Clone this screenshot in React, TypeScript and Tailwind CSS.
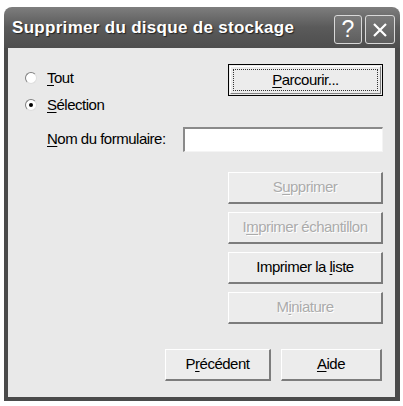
import type { ReactNode } from 'react'

const font = { fontFamily: '"Liberation Sans", Arial, sans-serif' }

const Mn = ({ children }: { children: ReactNode }) => <span className="underline underline-offset-2">{children}</span>

type BtnProps = { children: ReactNode; width: string; disabled?: boolean; focused?: boolean }

const Btn = ({ children, width, disabled, focused }: BtnProps) => {
  const base = `${width} h-[32px] flex items-center justify-center bg-[#ececec] text-[15px] tracking-[-0.5px]`
  const text = disabled ? 'text-[#ababab] [text-shadow:1px_1px_0_#ffffff]' : 'text-black'
  if (focused) {
    return (
      <div className={`${base} border border-black p-[1px]`}>
        <div className="w-full h-full border-t border-l border-white border-r border-b border-r-[#808080] border-b-[#808080] p-[2px]">
          <div className={`w-full h-full border border-dotted border-[#333] flex items-center justify-center ${text}`}>{children}</div>
        </div>
      </div>
    )
  }
  return (
    <div className={`${base} border-t border-l border-white border-r-2 border-b-2 border-r-[#7c7c7c] border-b-[#7c7c7c] ${text}`}>
      {children}
    </div>
  )
}

const Radio = ({ checked }: { checked?: boolean }) => (
  <div className="w-[12px] h-[12px] rounded-full bg-white border border-t-[#808080] border-l-[#808080] border-r-[#dedede] border-b-[#dedede] flex items-center justify-center">
    {checked && <div className="w-[4px] h-[4px] rounded-full bg-black" />}
  </div>
)

export default function App() {
  return (
    <div className="w-[403px] h-[406px] bg-white pt-[7px] pl-[4px]" style={font}>
      <div className="w-[396px] h-[394px] flex flex-col">
        {/* title bar */}
        <div className="h-[41px] rounded-t-[8px] bg-gradient-to-b from-[#7e7e7e] via-[#5a5a5a] to-[#4e4e4e] flex items-center pl-[8px] pr-[5px]">
          <span className="text-white font-bold text-[17px] tracking-[0.3px] [text-shadow:1px_1px_1px_#222]">
            Supprimer du disque de stockage
          </span>
          <div className="ml-auto flex gap-[3px] mt-[4px]">
            <div className="w-[28px] h-[29px] rounded-[3px] border border-[#d8d8d8] bg-gradient-to-b from-[#7a7a7a] to-[#5e5e5e] flex items-center justify-center text-white text-[23px] leading-none">
              ?
            </div>
            <div className="w-[30px] h-[29px] rounded-[3px] border border-[#d8d8d8] bg-gradient-to-b from-[#7a7a7a] to-[#5e5e5e] flex items-center justify-center">
              <svg width="16" height="16" viewBox="0 0 16 16">
                <path d="M2 2 L14 14 M14 2 L2 14" stroke="white" strokeWidth="2.2" />
              </svg>
            </div>
          </div>
        </div>
        {/* body */}
        <div className="flex-1 bg-[#e9e9e9] border-l-4 border-r-[5px] border-b-4 border-[#4a4a4a] pl-[17px] pr-[12px] pt-[16px] flex flex-col text-[15px] tracking-[-0.5px]">
          <div className="flex items-start">
            <div className="flex items-center gap-[10px] mt-[3px]">
              <Radio />
              <span>
                <Mn>T</Mn>out
              </span>
            </div>
            <div className="ml-auto">
              <Btn width="w-[155px]" focused>
                <span>
                  <Mn>P</Mn>arcourir...
                </span>
              </Btn>
            </div>
          </div>
          <div className="flex items-center gap-[10px] mt-[1px] h-[16px]">
            <Radio checked />
            <span>
              <Mn>S</Mn>élection
            </span>
          </div>
          <div className="flex items-center mt-[14px] pl-[22px]">
            <span>
              <Mn>N</Mn>om du formulaire:
            </span>
            <div className="ml-auto w-[200px] h-[25px] bg-white border-t-2 border-l-2 border-t-[#8a8a8a] border-l-[#8a8a8a] border-r border-b border-r-[#f4f4f4] border-b-[#f4f4f4]" />
          </div>
          <div className="flex flex-col items-end gap-[8px] mt-[20px]">
            <Btn width="w-[155px]" disabled>
              <span>
                S<Mn>u</Mn>pprimer
              </span>
            </Btn>
            <Btn width="w-[155px]" disabled>
              <span>
                I<Mn>m</Mn>primer échantillon
              </span>
            </Btn>
            <Btn width="w-[155px]">
              <span>
                Imprimer la <Mn>l</Mn>iste
              </span>
            </Btn>
            <Btn width="w-[155px]" disabled>
              <span>
                M<Mn>i</Mn>niature
              </span>
            </Btn>
          </div>
          <div className="flex justify-end gap-[10px] mt-[25px] pr-[1px]">
            <Btn width="w-[106px]">
              <span>
                P<Mn>r</Mn>écédent
              </span>
            </Btn>
            <Btn width="w-[101px]">
              <span>
                <Mn>A</Mn>ide
              </span>
            </Btn>
          </div>
        </div>
      </div>
    </div>
  )
}
